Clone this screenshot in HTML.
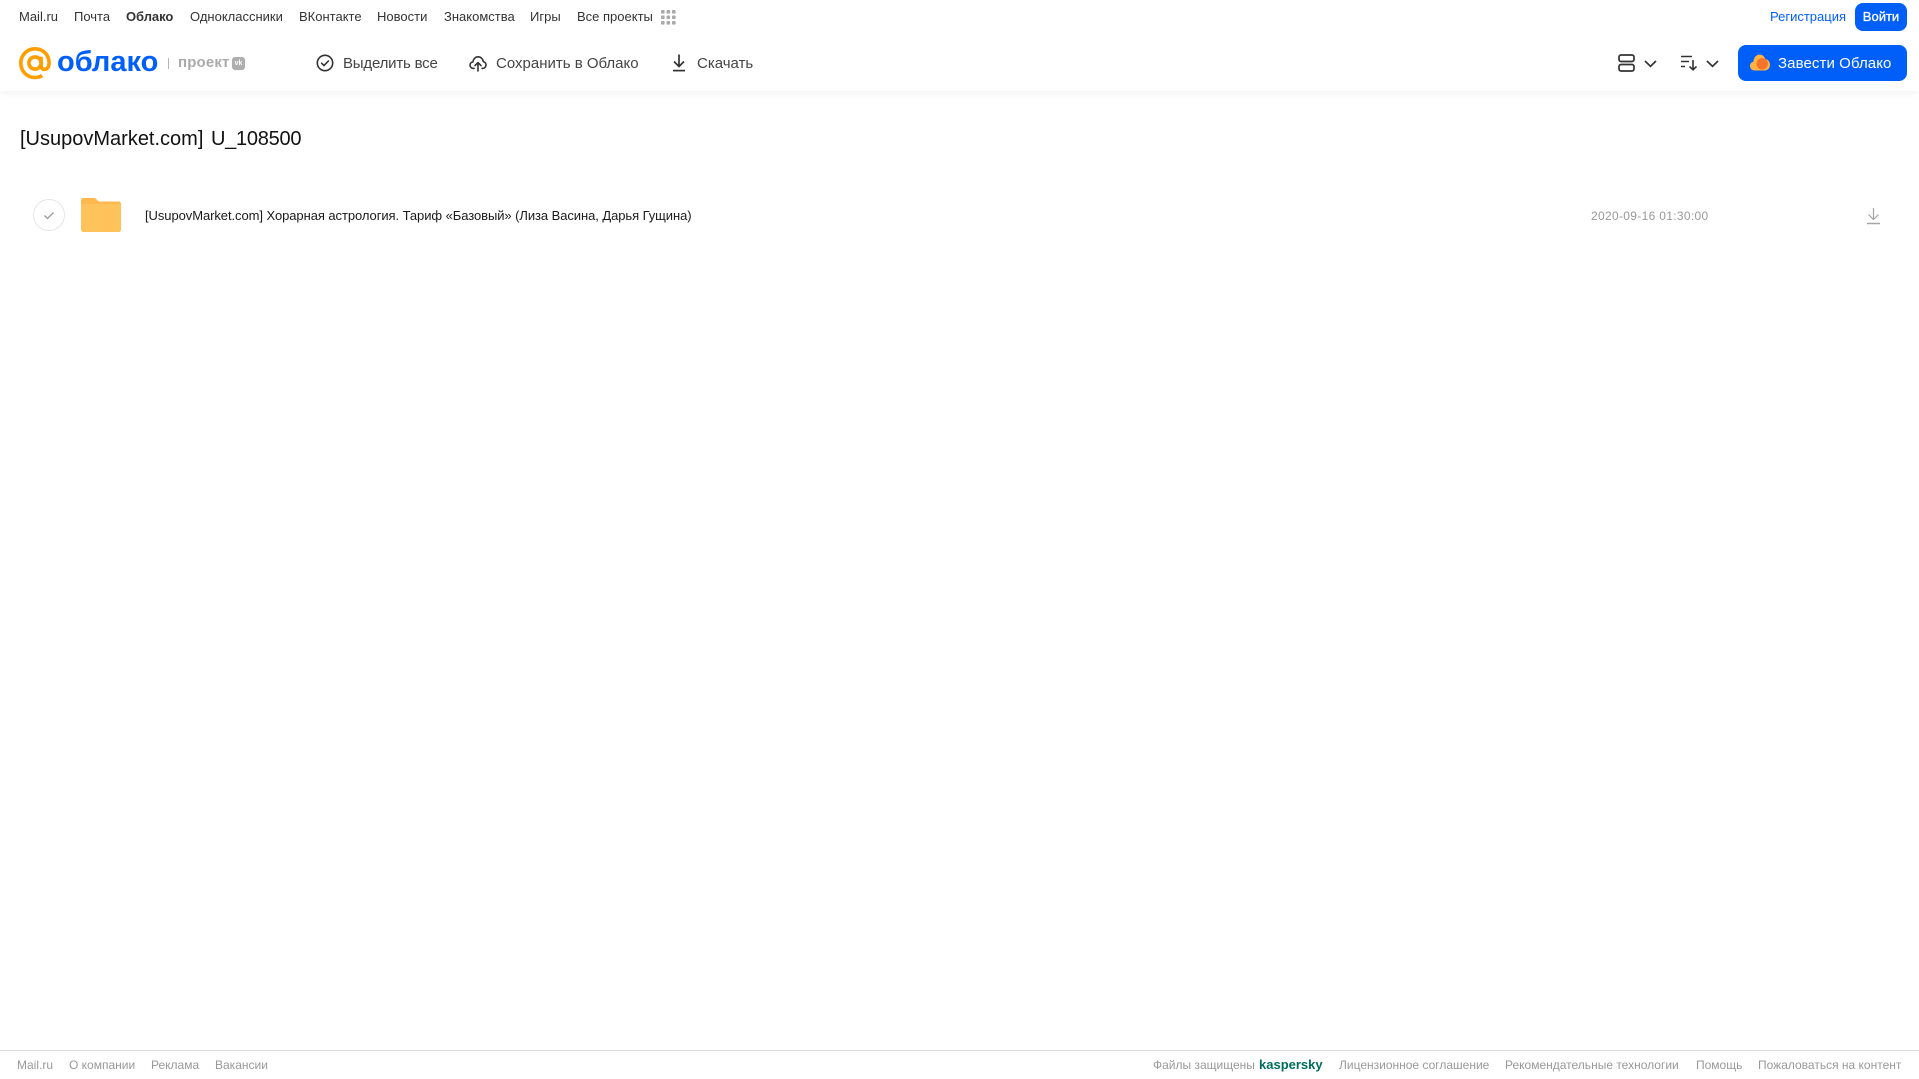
<!DOCTYPE html>
<html lang="ru">
<head>
<meta charset="utf-8">
<title>Облако</title>
<style>
html,body{margin:0;padding:0;background:#fff;width:1919px;height:1079px;overflow:hidden}
body{position:relative;font-family:"Liberation Sans",Arial,sans-serif;color:#2c2d2e}
.t{position:absolute;white-space:nowrap;line-height:20px;height:20px}
.n{top:7px;font-size:13px;color:#333}
.a{top:54px;font-size:15px;color:#444;letter-spacing:0}
.f{top:1055px;font-size:12px;color:#999}
svg{position:absolute;overflow:visible}
#hdr{position:absolute;left:0;top:0;width:1919px;height:91px;background:#fff;box-shadow:0 1px 8px rgba(0,0,0,.07)}
</style>
</head>
<body>
<div id="hdr"></div>

<span class="t n" style="left:19px">Mail.ru</span>
<span class="t n" style="left:74px">Почта</span>
<span class="t n" style="left:126px;font-weight:bold;letter-spacing:-.05px">Облако</span>
<span class="t n" style="left:190px">Одноклассники</span>
<span class="t n" style="left:299px">ВКонтакте</span>
<span class="t n" style="left:377px">Новости</span>
<span class="t n" style="left:444px">Знакомства</span>
<span class="t n" style="left:530px">Игры</span>
<span class="t n" style="left:577px">Все проекты</span>
<svg style="left:661px;top:10px" width="15" height="15" fill="#aaa"><rect x="0" y="0" width="3.6" height="3.6" rx=".8"/><rect x="5.5" y="0" width="3.6" height="3.6" rx=".8"/><rect x="11" y="0" width="3.6" height="3.6" rx=".8"/><rect x="0" y="5.5" width="3.6" height="3.6" rx=".8"/><rect x="5.5" y="5.5" width="3.6" height="3.6" rx=".8"/><rect x="11" y="5.5" width="3.6" height="3.6" rx=".8"/><rect x="0" y="11" width="3.6" height="3.6" rx=".8"/><rect x="5.5" y="11" width="3.6" height="3.6" rx=".8"/><rect x="11" y="11" width="3.6" height="3.6" rx=".8"/></svg>

<span class="t n" style="left:1770px;color:#005ff9">Регистрация</span>
<div style="position:absolute;left:1855px;top:3px;width:52px;height:28px;border-radius:8px;background:#005ff9;color:#fff;font-size:13px;-webkit-text-stroke:.3px #fff;line-height:28px;text-align:center">Войти</div>

<!-- logo -->
<svg style="left:19px;top:47px" width="33" height="33" viewBox="0 0 33 33" fill="none" stroke="#ff9e00" stroke-width="3.6"><circle cx="16" cy="16" r="6.1"/><path d="M22.1 9.800v8.600c0 2.600 1.500 4 3.400 4 2.500 0 4.600-2.400 4.600-6.400C30.100 7.800 24 1.800 16 1.800 8 1.800 1.800 8.200 1.800 16c0 8.200 6.200 14.500 14.200 14.500 3 0 5.200-.7 7.200-2"/></svg>
<span class="t" style="left:57px;top:44px;height:36px;line-height:36px;font-size:29px;font-weight:bold;color:#005ff9;letter-spacing:0">облако</span>
<div style="position:absolute;left:168px;top:58px;width:1px;height:11px;background:#b5b5b5"></div>
<span class="t" style="left:178px;top:53px;font-size:15px;font-weight:bold;color:#aaa;letter-spacing:.15px">проект</span>
<div style="position:absolute;left:232px;top:57px;width:13px;height:13px;border-radius:3px;background:#aeaeae;color:#fff;font-size:7px;font-weight:bold;line-height:13px;text-align:center">vk</div>

<!-- actions -->
<svg style="left:316px;top:54px" width="18" height="18" viewBox="0 0 18 18" fill="none" stroke="#333" stroke-width="1.6"><circle cx="9" cy="9" r="7.700"/><path d="M5.600 9.200l2.400 2.400 4.400-4.600" stroke-linecap="round" stroke-linejoin="round"/></svg>
<span class="t a" style="left:343px;letter-spacing:-.2px">Выделить все</span>
<svg style="left:469px;top:54px" width="18" height="18" viewBox="0 0 18 18" fill="none" stroke="#333" stroke-width="1.600" stroke-linecap="round" stroke-linejoin="round"><path d="M5 14.400H4.400C2.400 14.400 1 12.900 1 11.100c0-1.700 1.300-3 2.900-3.200C4.300 5 6.300 2.800 9.100 2.800c2.700 0 4.800 2 5.200 4.800 1.600.4 2.700 1.800 2.700 3.400 0 1.900-1.500 3.400-3.400 3.400H13"/><path d="M9 17V9M6 11.600L9 8.600l3 3"/></svg>
<span class="t a" style="left:496px">Сохранить в Облако</span>
<svg style="left:671px;top:54px" width="16" height="18" viewBox="0 0 16 18" fill="none" stroke="#333" stroke-width="1.700"><path d="M8 .5V12M3 7.500l5 5 5-5"/><path d="M2 16.600h12"/></svg>
<span class="t a" style="left:697px">Скачать</span>

<!-- right icons -->
<svg style="left:1618px;top:54px" width="17" height="18" viewBox="0 0 17 18" fill="none" stroke="#333" stroke-width="1.700"><rect x="1" y="1" width="15" height="6.500" rx="2"/><rect x="1" y="10.500" width="15" height="6.500" rx="2"/></svg>
<svg style="left:1644px;top:60px" width="13" height="8" viewBox="0 0 13 8" fill="none" stroke="#333" stroke-width="1.700"><path d="M1 1l5.500 5.300L12 1"/></svg>
<svg style="left:1681px;top:55px" width="17" height="16" viewBox="0 0 17 16" fill="none" stroke="#333" stroke-width="1.500"><path d="M0 1.500h11M0 6.500h8M0 11.500h4"/><path d="M12 5v9.500M8.500 11.500l3.500 3.300 3.500-3.300" stroke-width="1.600"/></svg>
<svg style="left:1706px;top:60px" width="13" height="8" viewBox="0 0 13 8" fill="none" stroke="#333" stroke-width="1.700"><path d="M1 1l5.500 5.300L12 1"/></svg>

<div style="position:absolute;left:1738px;top:45px;width:169px;height:36px;border-radius:8px;background:#005ff9"></div>
<svg style="left:1750px;top:54px" width="20" height="17" viewBox="0 0 20 17"><path d="M5 16.500C2 16.500 0 14.500 0 12c0-2.200 1.400-3.800 3.400-4.200C3.600 4 6 .6 9.500.6c3 0 5 2 5.800 4.400 2.600.3 4.700 2.900 4.700 5.900 0 3.200-2.400 5.600-5.500 5.600z" fill="#ffb340"/><circle cx="12.200" cy="9.800" r="5.700" fill="#f5732a"/></svg>
<span class="t" style="left:1778px;top:54px;font-size:15px;color:#fff;letter-spacing:.09px">Завести Облако</span>

<!-- title -->
<span class="t" style="left:20px;top:127px;height:24px;line-height:24px;font-size:20px;color:#111;word-spacing:2px">[UsupovMarket.com] <span style="letter-spacing:-.25px">U_108500</span></span>

<!-- row -->
<svg style="left:33px;top:199px" width="33" height="33" viewBox="0 0 33 33" fill="none"><circle cx="16" cy="16" r="15.500" stroke="#e6e6e6"/><path d="M11.500 16.500l3 3 6-6" stroke="#999" stroke-width="1.300"/></svg>
<svg style="left:81px;top:198px" width="40" height="34" viewBox="0 0 40 34"><path d="M0 2.500C0 1 1 0 2.500 0h10c1.500 0 2.300.6 3.200 1.600L17.500 3.500h20c1.500 0 2.500 1 2.500 2.500v4H0z" fill="#ffb84d"/><path d="M0 6h40v25.500c0 1.500-1 2.500-2.500 2.500h-35C1 34 0 33 0 31.500z" fill="#ffc35c"/></svg>
<span class="t" style="left:145px;top:206px;font-size:13px;color:#1a1a1a;letter-spacing:-.07px">[UsupovMarket.com] Хорарная астрология. Тариф «Базовый» (Лиза Васина, Дарья Гущина)</span>
<span class="t" style="left:1591px;top:206px;font-size:12px;color:#999;letter-spacing:.32px">2020-09-16 01:30:00</span>
<svg style="left:1866px;top:207px" width="15" height="18" viewBox="0 0 15 18" fill="none" stroke="#a5a5a5" stroke-width="1.200"><path d="M7.500 1v11M2.500 7.500l5 5 5-5"/><path d="M1 16.500h13" stroke-width="1.500"/></svg>

<!-- footer -->
<div style="position:absolute;left:0;top:1050px;width:1919px;height:1px;background:#d9d9d9"></div>
<span class="t f" style="left:17px">Mail.ru</span>
<span class="t f" style="left:69px">О компании</span>
<span class="t f" style="left:151px">Реклама</span>
<span class="t f" style="left:215px">Вакансии</span>
<span class="t f" style="left:1153px">Файлы защищены</span>
<span class="t f" style="left:1259px;font-weight:bold;color:#006d5c;font-size:13px">kaspersky</span>
<span class="t f" style="left:1339px">Лицензионное соглашение</span>
<span class="t f" style="left:1505px">Рекомендательные технологии</span>
<span class="t f" style="left:1696px">Помощь</span>
<span class="t f" style="left:1758px">Пожаловаться на контент</span>
</body>
</html>
